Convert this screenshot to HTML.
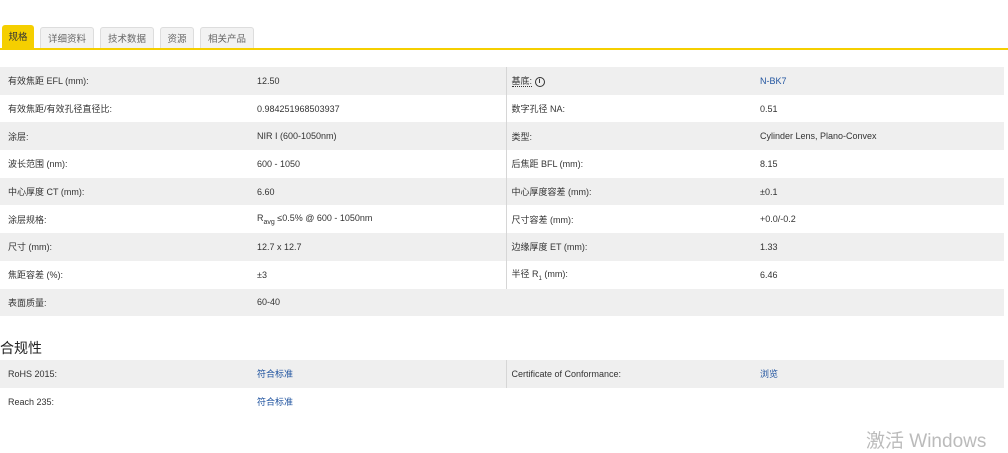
<!DOCTYPE html>
<html><head><meta charset="utf-8"><style>
body{margin:0;width:1008px;height:435px;overflow:hidden;background:#fff;font-family:"Liberation Sans","Noto Sans CJK SC",sans-serif;font-size:9px;color:#333;position:relative}
.tabs{position:absolute;top:25px;left:2px;height:24px}
.tab{position:absolute;top:2px;height:22px;background:#f2f2f2;border:1px solid #ddd;border-bottom:none;border-radius:3px 3px 0 0;font-size:9.5px;color:#666;line-height:24px;text-align:center;box-sizing:border-box}
.tab.a{top:0;height:24px;background:#f5cf00;border-color:#f5cf00;color:#333}
.line{position:absolute;top:48px;left:0;width:1008px;height:2px;background:#f5cf00}
table{position:absolute;left:0;width:1004px;border-collapse:collapse;table-layout:fixed}
td{height:27.7px;padding:0;vertical-align:middle;box-sizing:border-box;white-space:nowrap}
tr:nth-child(odd) td{background:#efefef}
td.l{padding-left:8px;width:257px}
td.v{width:249px}
td.l2{padding-left:5px;width:254px;border-left:1px solid #d6d6d6}
td.v2{width:244px}
.b{color:#2255a0}
h3{position:absolute;top:338px;left:0;margin:0;font-size:14px;font-weight:normal;color:#222}
.wm{position:absolute;left:866px;top:426px;font-size:19px;color:#bbb}
</style></head><body>
<div class="tabs">
<div class="tab a" style="left:0;width:32px">规格</div>
<div class="tab" style="left:38px;width:54px">详细资料</div>
<div class="tab" style="left:98px;width:54px">技术数据</div>
<div class="tab" style="left:158px;width:34px">资源</div>
<div class="tab" style="left:198px;width:54px">相关产品</div>
</div>
<div class="line"></div>
<table style="top:67px">
<tr><td class="l">有效焦距 EFL (mm):</td><td class="v">12.50</td><td class="l2"><span style="border-bottom:1px dotted #333">基底:</span> <b style="display:inline-block;width:8px;height:8px;border:1.5px solid #333;border-radius:50%;font-size:7px;line-height:8px;text-align:center;vertical-align:middle">i</b></td><td class="v2 b">N-BK7</td></tr>
<tr><td class="l">有效焦距/有效孔径直径比:</td><td class="v">0.984251968503937</td><td class="l2">数字孔径 NA:</td><td class="v2">0.51</td></tr>
<tr><td class="l">涂层:</td><td class="v">NIR I (600-1050nm)</td><td class="l2">类型:</td><td class="v2">Cylinder Lens, Plano-Convex</td></tr>
<tr><td class="l">波长范围 (nm):</td><td class="v">600 - 1050</td><td class="l2">后焦距 BFL (mm):</td><td class="v2">8.15</td></tr>
<tr><td class="l">中心厚度 CT (mm):</td><td class="v">6.60</td><td class="l2">中心厚度容差 (mm):</td><td class="v2">±0.1</td></tr>
<tr><td class="l">涂层规格:</td><td class="v">R<sub style="font-size:7px">avg</sub> ≤0.5% @ 600 - 1050nm</td><td class="l2">尺寸容差 (mm):</td><td class="v2">+0.0/-0.2</td></tr>
<tr><td class="l">尺寸 (mm):</td><td class="v">12.7 x 12.7</td><td class="l2">边缘厚度 ET (mm):</td><td class="v2">1.33</td></tr>
<tr><td class="l">焦距容差 (%):</td><td class="v">±3</td><td class="l2">半径 R<sub style="font-size:6px">1</sub> (mm):</td><td class="v2">6.46</td></tr>
<tr><td class="l">表面质量:</td><td class="v">60-40</td><td class="l2" style="border-left:none"></td><td class="v2"></td></tr>
</table>
<h3>合规性</h3>
<table style="top:360px">
<tr><td class="l">RoHS 2015:</td><td class="v b">符合标准</td><td class="l2">Certificate of Conformance:</td><td class="v2 b">浏览</td></tr>
<tr><td class="l">Reach 235:</td><td class="v b">符合标准</td><td class="l2" style="border-left:none"></td><td class="v2"></td></tr>
</table>
<div class="wm">激活 Windows</div>
</body></html>
